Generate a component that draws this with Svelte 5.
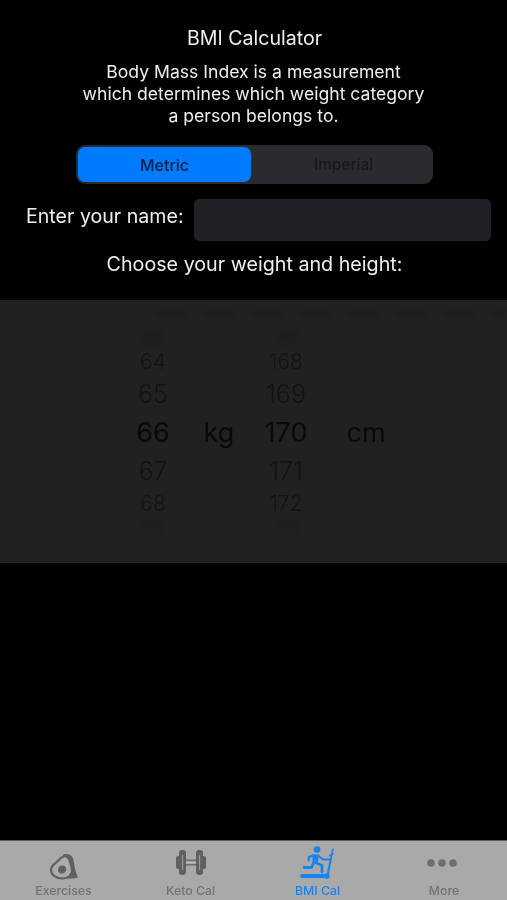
<script>
  const wheelA = [
    { t: '63', c: 'r0' }, { t: '64', c: 'r1' }, { t: '65', c: 'r2' }, { t: '66', c: 'r3' },
    { t: '67', c: 'r4' }, { t: '68', c: 'r5' }, { t: '69', c: 'r6' }
  ];
  const wheelB = [
    { t: '167', c: 'r0' }, { t: '168', c: 'r1' }, { t: '169', c: 'r2' }, { t: '170', c: 'r3' },
    { t: '171', c: 'r4' }, { t: '172', c: 'r5' }, { t: '173', c: 'r6' }
  ];
</script>

<div class="page">
  <main class="content">
    <h1>BMI Calculator</h1>
    <p class="intro">Body Mass Index is a measurement<br />which determines which weight category<br />a person belongs to.</p>
    <div class="segmented">
      <div class="seg active">Metric</div>
      <div class="seg">Imperial</div>
    </div>
    <div class="name-row">
      <span class="name-label">Enter your name:</span>
      <div class="name-input"></div>
    </div>
    <p class="choose">Choose your weight and height:</p>
  </main>

  <section class="picker">
    <div class="ghost"></div>
    <div class="band"></div>
    <div class="picker-grid">
      <div class="wheel">
        {#each wheelA as r}<div class="row {r.c}">{r.t}</div>{/each}
      </div>
      <div class="unit">kg</div>
      <div class="wheel">
        {#each wheelB as r}<div class="row {r.c}">{r.t}</div>{/each}
      </div>
      <div class="unit">cm</div>
    </div>
  </section>

  <div class="spacer"></div>

  <nav class="tabbar">
    <div class="tab">
      <svg class="i-avo" viewBox="0 0 30 27" width="30" height="27" aria-hidden="true">
        <path d="M14 1.500c4.500-1.500 8.500 0 10 4 1.300 3.500 1.300 7.500 2.300 11.500.6 2.500 1.700 5.500 2.700 7.500-4 1.200-9 1.500-14 .5z" fill="#606060"/>
        <path d="M14.500 3.500c3-1 5.500 1 6.200 4.500.7 3.500 2.300 5.800 2.300 9.300 0 5-4 8.200-9.500 8.200-6.500 0-11.500-3.500-11.500-8.500 0-4.300 3.500-5.800 6-8.300 2.500-2.300 3.500-4.500 6.500-5.200z" fill="#ababab" stroke="#606060" stroke-width="2.200"/>
        <path d="M12.500 12.500c2.700-.5 4.800 1.300 4.800 3.700 0 2.500-2 4.300-4.500 4.300-2.200 0-3.800-1.500-3.800-3.300 0-2.200 1.300-4.300 3.500-4.700z" fill="#606060"/>
      </svg>
      <span>Exercises</span>
    </div>
    <div class="tab">
      <svg class="i-dumb" viewBox="0 0 30 27" width="30" height="27" aria-hidden="true">
        <g fill="#606060">
          <rect x="0" y="7" width="4" height="13" rx="2"/>
          <rect x="3" y="1" width="7" height="25" rx="3"/>
          <rect x="20" y="1" width="7" height="25" rx="3"/>
          <rect x="26" y="7" width="4" height="13" rx="2"/>
          <rect x="10" y="10.500" width="10" height="6" fill="#6e6e6e"/>
        </g>
        <rect x="10" y="12.300" width="10" height="2.400" fill="#bdbdbd"/>
        <rect x="6" y="6" width="1.200" height="15" fill="#9a9a9a"/>
        <rect x="23" y="6" width="1.200" height="15" fill="#9a9a9a"/>
      </svg>
      <span>Keto Cal</span>
    </div>
    <div class="tab current">
      <svg class="i-run" viewBox="0 0 34 33" width="34" height="33" aria-hidden="true">
        <circle cx="17" cy="3.500" r="3.300" fill="#1a82f0"/>
        <polygon points="12.500,8.500 19,8.500 17.500,17.500 12.500,17" fill="#1a82f0"/>
        <rect x="3" y="20" width="7.500" height="3" rx="1" fill="#1a82f0"/>
        <rect x="0" y="28" width="28" height="4" rx="2" fill="#1a82f0"/>
        <circle cx="27" cy="30" r="2.700" fill="#1a82f0"/>
        <g fill="none" stroke="#1a82f0" stroke-linecap="round" stroke-linejoin="round">
          <path d="M18 9.500L23 13.500H29" stroke-width="2.100"/>
          <path d="M13 9.500L9 11L8.500 14.500" stroke-width="2.100"/>
          <path d="M15.500 16.500L22 19.500V26" stroke-width="2.800"/>
          <path d="M13.500 17L11.500 21.500H9" stroke-width="2.800"/>
          <path d="M27.500 29.500L31 12" stroke-width="2.100"/>
          <path d="M31 12L33 3" stroke-width="1.600"/>
          <path d="M29.500 9.500L33 8" stroke-width="1.400"/>
        </g>
      </svg>
      <span>BMI Cal</span>
    </div>
    <div class="tab">
      <svg class="i-more" viewBox="0 0 30 8" width="30" height="8" aria-hidden="true" fill="#6e6e6e">
        <circle cx="4" cy="4" r="3.800"/>
        <circle cx="15" cy="4" r="3.800"/>
        <circle cx="26" cy="4" r="3.800"/>
      </svg>
      <span>More</span>
    </div>
  </nav>
</div>

<style>
  :global(body) {
    margin: 0;
    background: #000;
  }
  .page {
    width: 507px;
    height: 900px;
    display: flex;
    flex-direction: column;
    background: #000;
    font-family: Inter, "Liberation Sans", sans-serif;
    overflow: hidden;
  }
  .content {
    display: flex;
    flex-direction: column;
    align-items: center;
    height: 300px;
    flex: none;
    color: #efefef;
    filter: blur(0.3px);
  }
  h1 {
    margin: 26px 0 0 2px;
    font-size: 19.6px;
    line-height: 24px;
    font-weight: 400;
  }
  .intro {
    margin: 11px 0 0;
    font-size: 17.6px;
    line-height: 22px;
    text-align: center;
  }
  .segmented {
    margin: 18px 0 0 2px;
    width: 357px;
    height: 39px;
    box-sizing: border-box;
    padding: 2px;
    display: flex;
    background: #2a2b2e;
    border-radius: 9px;
    font-size: 16px;
    font-weight: 500;
  }
  .seg {
    flex: 1;
    display: flex;
    align-items: center;
    justify-content: center;
    padding-left: 5px;
    font-size: 15.4px;
    color: #17181a;
  }
  .seg.active {
    flex: none;
    width: 173px;
    padding-left: 0;
    font-size: 16px;
    background: #007aff;
    border-radius: 7px;
    color: #03204a;
  }
  .name-row {
    align-self: stretch;
    display: flex;
    align-items: flex-start;
    margin-top: 15px;
    padding: 0 16px 0 26px;
    gap: 10px;
  }
  .name-label {
    font-size: 19.6px;
    line-height: 34px;
    white-space: nowrap;
  }
  .name-input {
    flex: 1;
    height: 42px;
    background: #1f2124;
    border-radius: 5px;
  }
  .choose {
    margin: 11px 0 0 2px;
    font-size: 19.7px;
    line-height: 24px;
  }
  .picker {
    flex: none;
    height: 263px;
    background: #1f2123;
    position: relative;
    overflow: hidden;
  }
  .ghost {
    position: absolute;
    left: 155px;
    right: 0;
    top: 12px;
    height: 5px;
    background: repeating-linear-gradient(90deg, rgba(0, 0, 0, 0.09) 0 32px, transparent 32px 48px);
    filter: blur(1.5px);
  }
  .band {
    position: absolute;
    left: 0;
    right: 0;
    top: 110px;
    height: 43px;
    border-top: 1px solid rgba(0, 0, 0, 0.06);
    border-bottom: 1px solid rgba(0, 0, 0, 0.06);
  }
  .picker-grid {
    position: relative;
    display: grid;
    grid-template-columns: 70px 62px 72px 88px;
    padding-left: 118px;
    height: 100%;
    align-items: center;
  }
  .wheel {
    align-self: start;
    display: flex;
    flex-direction: column;
    align-items: center;
    padding-top: 28px;
  }
  .row {
    color: #0d0e10;
    font-weight: 300;
  }
  .r0, .r6 {
    font-size: 15px;
    filter: blur(2px);
    opacity: 0.5;
  }
  .r0 { height: 20px; line-height: 20px; }
  .r6 { height: 14px; line-height: 14px; }
  .r1, .r5 {
    font-size: 21px;
    filter: blur(0.7px);
    opacity: 0.7;
  }
  .r1 { height: 27px; line-height: 27px; }
  .r5 { height: 30px; line-height: 30px; }
  .r2, .r4 {
    font-size: 25px;
    filter: blur(0.6px);
    opacity: 0.75;
  }
  .r2 { height: 38px; line-height: 38px; }
  .r4 { height: 36px; line-height: 36px; }
  .r3 {
    font-size: 27px;
    height: 40px;
    line-height: 40px;
    font-weight: 400;
    color: #08090a;
    filter: blur(0.3px);
  }
  .unit {
    font-size: 27px;
    line-height: 32px;
    padding-top: 2px;
    text-align: center;
    color: #08090a;
    filter: blur(0.3px);
  }
  .spacer {
    flex: 1;
  }
  .tabbar {
    flex: none;
    height: 60px;
    box-sizing: border-box;
    border-top: 1px solid #5a5a5a;
    background: #a9a9a9;
    display: grid;
    grid-template-columns: 127px 127px 127px 126px;
  }
  .tab {
    display: flex;
    flex-direction: column;
    align-items: center;
    padding-bottom: 2px;
    color: #737373;
    font-size: 12.3px;
    line-height: 14px;
    font-weight: 500;
    filter: blur(0.4px);
  }
  .tab span {
    margin-top: auto;
  }
  .tab.current {
    color: #1a82f0;
  }
  .i-avo { margin-top: 12px; }
  .i-dumb { margin-top: 8px; }
  .i-run { margin-top: 5px; margin-left: -2px; }
  .i-more { margin-top: 18px; margin-left: -4px; }
</style>
